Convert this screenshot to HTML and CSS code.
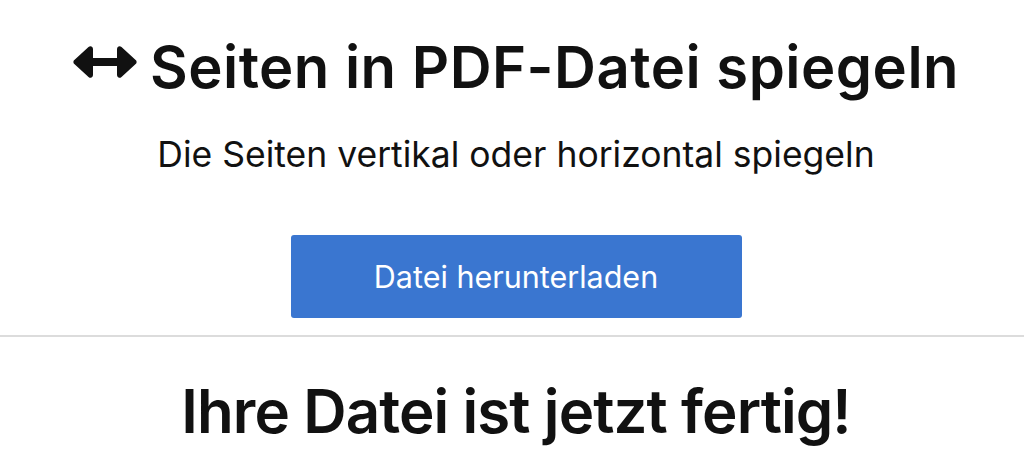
FILE: index.html
```html
<!DOCTYPE html>
<html lang="de">
<head>
<meta charset="utf-8">
<link rel="stylesheet" href="styles.css">
</head>
<body>
<div class="page">
  <section class="top">
    <h1 class="title">
      <svg class="icon" viewBox="0 0 64 32" aria-hidden="true"><path fill="#111" d="M0.8 17.4L15.5 31Q17 32.3 18.5 31.6Q20 30.8 20 29V20H44V29Q44 30.8 45.5 31.6Q47 32.3 48.5 31L63.2 17.4Q64 16 63.2 14.6L48.5 1Q47 -0.3 45.5 0.4Q44 1.2 44 3V12H20V3Q20 1.2 18.5 0.4Q17 -0.3 15.5 1L0.8 14.6Q0 16 0.8 17.4Z"/></svg>
      <span>Seiten in PDF-Datei spiegeln</span>
    </h1>
    <p class="subtitle">Die Seiten vertikal oder horizontal spiegeln</p>
    <a class="btn" href="#">Datei herunterladen</a>
  </section>
  <hr class="divider">
  <section class="result">
    <h2 class="ready">Ihre Datei ist jetzt fertig!</h2>
  </section>
</div>
</body>
</html>
```
FILE: styles.css
```css
html, body {
  margin: 0;
  padding: 0;
  background: #fff;
}
body {
  font-family: Inter, "Noto Sans", sans-serif;
  color: #111;
  overflow: hidden;
}
.page {
  display: flex;
  flex-direction: column;
}
.top {
  display: flex;
  flex-direction: column;
  align-items: center;
  padding: 32px 0 0 8px;
}
.title {
  display: flex;
  align-items: flex-start;
  gap: 13px;
  margin: 0;
  font-size: 58px;
  font-weight: 600;
  line-height: 70px;
  letter-spacing: 0.5px;
}
.icon {
  width: 64px;
  height: 32px;
  margin-top: 14px;
  flex: none;
}
.subtitle {
  margin: 31px 0 0;
  font-size: 35.5px;
  font-weight: 400;
  line-height: 44px;
}
.btn {
  display: flex;
  align-items: center;
  justify-content: center;
  margin-top: 58px;
  width: 451px;
  height: 83px;
  background: #3a76d0;
  color: #fff;
  border-radius: 3px;
  font-size: 30.5px;
  font-weight: 400;
  text-decoration: none;
}
.divider {
  border: 0;
  border-top: 2px solid #dcdcdc;
  margin: 17px 0 0;
}
.result {
  display: flex;
  justify-content: center;
  padding-left: 8px;
}
.ready {
  margin: 38px 0 0;
  font-size: 60px;
  font-weight: 600;
  line-height: 72px;
  letter-spacing: -0.9px;
}
```
